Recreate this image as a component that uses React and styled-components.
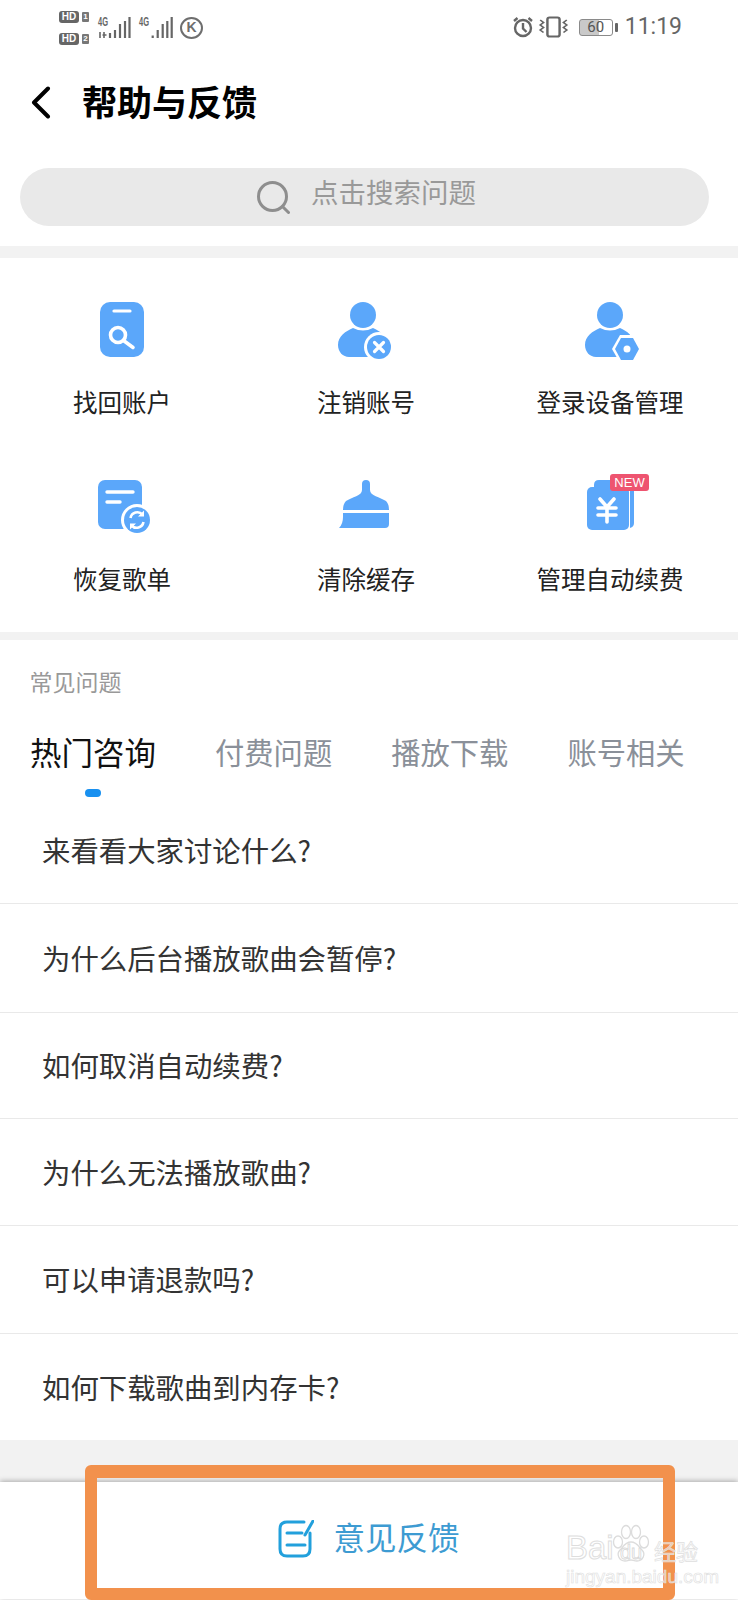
import styled, { createGlobalStyle } from "styled-components";

const BLUE = "#5ba7fa";

const GlobalStyle = createGlobalStyle`
    html, body {
        margin: 0;
        padding: 0;
        background: #ffffff;
    }
    body {
        font-family: "Noto Sans CJK SC", "Noto Sans", sans-serif;
    }
    * {
        box-sizing: border-box;
    }
`;

function Signal({ first }) {
    const xs = first ? [13, 18, 23, 28, 32.5] : [14.7, 19.7, 24.7, 29.3, 33.7];
    const tops = first ? [19, 16, 10, 7, 3] : [21.5, 16, 10, 7, 3];
    return (
        <svg width="36" height="26" viewBox="0 0 36 26">
            <text x="1" y="12" fontSize="12" fontWeight="700" fill="#666" fontFamily="Liberation Sans, sans-serif" textLength="10" lengthAdjust="spacingAndGlyphs">4G</text>
            {first && <path d="M3 18v6M7 18v6M5.5 21h4" stroke="#666" strokeWidth="1.6" fill="none" />}
            {xs.map((x, i) => (
                <line key={x} x1={x} x2={x} y1={tops[i]} y2="24" stroke="#666" strokeWidth="2.2" />
            ))}
        </svg>
    );
}

function HdRow({ n }) {
    return (
        <HdLine>
            <HdBadge>HD</HdBadge>
            <HdNum>{n}</HdNum>
        </HdLine>
    );
}

function AlarmIcon() {
    return (
        <svg width="22" height="22" viewBox="0 0 22 22" fill="none" stroke="#666" strokeWidth="2.4">
            <circle cx="11" cy="12" r="8" />
            <path d="M11 7v5.5l3.5 3.5M2 5l3.5-3M20 5l-3.5-3" />
        </svg>
    );
}

function VibrateIcon() {
    return (
        <svg width="31" height="22" viewBox="0 0 28 22" preserveAspectRatio="none" fill="none" stroke="#666" strokeWidth="2.2">
            <rect x="8.5" y="1.5" width="11" height="19" rx="2" />
            <path d="M2 4l3 2.5-3 2.5 3 2.5-3 2.5 3 2.5M26 4l-3 2.5 3 2.5-3 2.5 3 2.5-3 2.5" strokeWidth="1.6" />
        </svg>
    );
}

function BackIcon() {
    return (
        <svg width="20" height="33" viewBox="0 0 20 33" fill="none" stroke="#000" strokeWidth="4" strokeLinecap="round" strokeLinejoin="round">
            <path d="M17 2.5L3 16.5l14 14" />
        </svg>
    );
}

function SearchIcon() {
    return (
        <svg width="33" height="33" viewBox="0 0 33 33" fill="none" stroke="#8e8e8e" strokeWidth="3">
            <circle cx="15.5" cy="15.5" r="14" />
            <path d="M25.5 25.5l6 6" strokeLinecap="round" />
        </svg>
    );
}

function FindIcon() {
    return (
        <svg width="60" height="60" viewBox="0 0 60 60">
            <rect x="8" y="2" width="44" height="55" rx="10" fill={BLUE} />
            <path d="M22 11h16" stroke="#fff" strokeWidth="3.2" strokeLinecap="round" />
            <circle cx="26" cy="35" r="7.5" fill="none" stroke="#fff" strokeWidth="3.6" />
            <path d="M31.5 40.5L41 47.5" stroke="#fff" strokeWidth="3.6" strokeLinecap="round" />
        </svg>
    );
}

function PersonBody({ headX }) {
    return (
        <g fill={BLUE}>
            <circle cx={headX} cy="15" r="13" />
            <path d={`M${headX - 25} 45C${headX - 25} 36 ${headX - 17} 31 ${headX - 10} 28Q${headX} 33 ${headX + 10} 28C${headX + 17} 31 ${headX + 24} 36 ${headX + 24} 45C${headX + 24} 52 ${headX + 14} 57 ${headX + 8} 57H${headX - 14}C${headX - 20} 57 ${headX - 25} 52 ${headX - 25} 45Z`} />
        </g>
    );
}

function CancelIcon() {
    return (
        <svg width="60" height="60" viewBox="0 0 60 60">
            <PersonBody headX={27} />
            <circle cx="43" cy="47" r="15" fill="#fff" />
            <circle cx="43" cy="47" r="12" fill={BLUE} />
            <path d="M38.5 42.5l9 9M47.5 42.5l-9 9" stroke="#fff" strokeWidth="3.2" strokeLinecap="round" />
        </svg>
    );
}

function DeviceIcon() {
    return (
        <svg width="60" height="60" viewBox="0 0 60 60" overflow="visible">
            <PersonBody headX={30} />
            <path d="M40 35h14L62 49 54 63H40L32 49Z" fill="#fff" />
            <path d="M41 38h12L59 49 53 60H41L35 49Z" fill={BLUE} />
            <circle cx="47" cy="49" r="3.5" fill="#fff" />
        </svg>
    );
}

function RestoreIcon() {
    return (
        <svg width="60" height="60" viewBox="0 0 60 60">
            <rect x="6" y="3" width="44" height="49" rx="7" fill={BLUE} />
            <path d="M15 15h26M15 25h13" stroke="#fff" strokeWidth="3.4" strokeLinecap="round" />
            <circle cx="45" cy="43" r="16" fill="#fff" />
            <circle cx="45" cy="43" r="13" fill={BLUE} />
            <path d="M38.5 41a7 7 0 0 1 12-3.5M51.5 45a7 7 0 0 1-12 3.5" fill="none" stroke="#fff" strokeWidth="2.6" />
            <path d="M52 33.5v6h-6ZM38 52.5v-6h6Z" fill="#fff" />
        </svg>
    );
}

function BroomIcon() {
    return (
        <svg width="60" height="60" viewBox="0 0 60 60" fill={BLUE}>
            <path d="M26 7a4 4 0 0 1 8 0V13C34 19 44 20 50 24Q53 27 53 33H7Q7 27 10 24C16 20 26 19 26 13Z" />
            <path d="M7 36H53V47Q53 51 49 51H3Q7 47 7 40Z" />
        </svg>
    );
}

function RenewIcon() {
    return (
        <svg width="60" height="60" viewBox="0 0 60 60">
            <path d="M14 8q0-5 5-5h30q5 0 5 5v38q0 4-4 5V10H14Z" fill={BLUE} />
            <rect x="7" y="10" width="42" height="43" rx="5" fill={BLUE} />
            <path d="M20 22l7 8 7-8M18 31h18M18 38h18M27 30v15" fill="none" stroke="#fff" strokeWidth="3.6" strokeLinecap="round" />
        </svg>
    );
}

function FeedbackIcon() {
    return (
        <svg width="36" height="38" viewBox="0 0 36 38" fill="none" stroke="#22a0dc" strokeWidth="3" strokeLinecap="round">
            <path d="M26 2H9Q2 2 2 9V29Q2 36 9 36H25Q32 36 32 29V13" />
            <path d="M9 13H24M9 25H27" />
            <path d="M35 1L27 15" />
        </svg>
    );
}

function Paw() {
    return (
        <svg width="46" height="40" viewBox="0 0 46 40" fill="rgba(255,255,255,0.35)" stroke="#dcdcdc" strokeWidth="1.3">
            <ellipse cx="10" cy="18" rx="4.5" ry="6" />
            <ellipse cx="18" cy="8" rx="4.5" ry="6.5" />
            <ellipse cx="28" cy="8" rx="4.5" ry="6.5" />
            <ellipse cx="36" cy="18" rx="4.5" ry="6" />
            <path d="M23 18c6 0 8 5 11 8 4 4 1 11-5 11-3 0-4-1-6-1s-3 1-6 1c-6 0-9-7-5-11 3-3 5-8 11-8Z" />
        </svg>
    );
}

const shortcuts = [
    { label: "找回账户", Icon: FindIcon },
    { label: "注销账号", Icon: CancelIcon },
    { label: "登录设备管理", Icon: DeviceIcon },
    { label: "恢复歌单", Icon: RestoreIcon },
    { label: "清除缓存", Icon: BroomIcon },
    { label: "管理自动续费", Icon: RenewIcon, isNew: true },
];

const tabs = ["热门咨询", "付费问题", "播放下载", "账号相关"];

const questions = [
    { text: "来看看大家讨论什么?", height: 107 },
    { text: "为什么后台播放歌曲会暂停?", height: 109 },
    { text: "如何取消自动续费?", height: 106 },
    { text: "为什么无法播放歌曲?", height: 107 },
    { text: "可以申请退款吗?", height: 108 },
    { text: "如何下载歌曲到内存卡?", height: 106 },
];

export default function App() {
    return (
        <Page>
            <GlobalStyle />
            <StatusBar>
                <HdStack>
                    <HdRow n="1" />
                    <HdRow n="2" />
                </HdStack>
                <SignalGroup>
                    <Signal first />
                    <Signal />
                </SignalGroup>
                <KBadge>K</KBadge>
                <StatusRight>
                    <AlarmIcon />
                    <VibrateIcon />
                    <Battery>
                        <BatteryBody>60</BatteryBody>
                        <BatteryTip />
                    </Battery>
                    <Time>11:19</Time>
                </StatusRight>
            </StatusBar>

            <Header>
                <BackIcon />
                <Title>帮助与反馈</Title>
            </Header>

            <SearchBar>
                <SearchIcon />
                <SearchHint>点击搜索问题</SearchHint>
            </SearchBar>

            <Divider />

            <ShortcutGrid>
                {shortcuts.map(({ label, Icon, isNew }) => (
                    <Shortcut key={label}>
                        <IconBox>
                            <Icon />
                            {isNew && <NewTag>NEW</NewTag>}
                        </IconBox>
                        <ShortcutLabel>{label}</ShortcutLabel>
                    </Shortcut>
                ))}
            </ShortcutGrid>

            <Divider $thin />

            <SectionTitle>常见问题</SectionTitle>

            <TabBar>
                {tabs.map((tab, i) => (
                    <Tab key={tab}>
                        <TabText $active={i === 0}>{tab}</TabText>
                        {i === 0 && <TabMark />}
                    </Tab>
                ))}
            </TabBar>

            <QuestionList>
                {questions.map((q, i) => (
                    <Question key={q.text} $height={q.height} $last={i === questions.length - 1}>{q.text}</Question>
                ))}
            </QuestionList>

            <GrayBand />

            <Footer>
                <FeedbackIcon />
                <FooterText>意见反馈</FooterText>
            </Footer>

            <Highlight />

            <Watermark>
                <WatermarkTop>
                    <WatermarkBai>Bai</WatermarkBai>
                    <PawWrap>
                        <Paw />
                        <WatermarkDu>du</WatermarkDu>
                    </PawWrap>
                    <WatermarkCn>经验</WatermarkCn>
                </WatermarkTop>
                <WatermarkUrl>jingyan.baidu.com</WatermarkUrl>
            </Watermark>
        </Page>
    );
}

const Page = styled.div`
    position: relative;
    width: 738px;
    height: 1600px;
    overflow: hidden;
    background: #ffffff;
`;

const StatusBar = styled.div`
    height: 56px;
    padding: 11px 56px 0 59px;
    display: flex;
    align-items: flex-start;
    color: #666666;
`;

const HdStack = styled.div`
    display: flex;
    flex-direction: column;
    gap: 10px;
`;

const HdLine = styled.div`
    display: flex;
    align-items: center;
    gap: 3px;
`;

const HdBadge = styled.span`
    width: 20px;
    height: 12px;
    border-radius: 3px;
    background: #666666;
    color: #ffffff;
    font-family: "Liberation Sans", sans-serif;
    font-size: 10px;
    font-weight: 700;
    line-height: 12px;
    text-align: center;
`;

const HdNum = styled.span`
    width: 7px;
    height: 10px;
    border-radius: 1px;
    background: #777777;
    color: #ffffff;
    font-family: "Liberation Sans", sans-serif;
    font-size: 8px;
    font-weight: 700;
    line-height: 10px;
    text-align: center;
`;

const SignalGroup = styled.div`
    margin: 3px 0 0 8px;
    display: flex;
    gap: 5px;
`;

const KBadge = styled.div`
    width: 23px;
    height: 22px;
    margin: 6px 0 0 6px;
    border: 2.5px solid #6e6e6e;
    border-radius: 50%;
    color: #6e6e6e;
    font-family: "Liberation Sans", sans-serif;
    font-size: 14px;
    font-weight: 700;
    line-height: 17px;
    text-align: center;
`;

const StatusRight = styled.div`
    margin: 5px 0 0 auto;
    height: 22px;
    display: flex;
    align-items: center;
    gap: 4px;
`;

const Battery = styled.div`
    margin-left: 6px;
    display: flex;
    align-items: center;
    gap: 2px;
`;

const BatteryBody = styled.div`
    width: 34px;
    height: 17px;
    border: 1.5px solid #8a8a8a;
    border-radius: 3px;
    background: linear-gradient(to right, #c9c9c9 60%, #ffffff 60%);
    color: #555555;
    font-family: Roboto, sans-serif;
    font-size: 15px;
    line-height: 14px;
    text-align: center;
`;

const BatteryTip = styled.div`
    width: 3px;
    height: 9px;
    border-radius: 1px;
    background: #666666;
`;

const Time = styled.div`
    margin-left: 3px;
    color: #666666;
    font-family: Roboto, sans-serif;
    font-size: 23px;
    line-height: 22px;
`;

const Header = styled.div`
    height: 92px;
    padding-left: 31px;
    display: flex;
    align-items: center;
    gap: 31px;
`;

const Title = styled.h1`
    margin: 0 0 2px;
    color: #000000;
    font-size: 35px;
    font-weight: 700;
    line-height: 40px;
`;

const SearchBar = styled.div`
    width: 689px;
    height: 58px;
    margin: 20px 0 20px 20px;
    padding-left: 4px;
    border-radius: 29px;
    background: #e9e9e9;
    display: flex;
    align-items: center;
    justify-content: center;
    gap: 21px;
`;

const SearchHint = styled.span`
    margin-bottom: 13px;
    color: #999999;
    font-size: 27.5px;
    line-height: 32px;
`;

const Divider = styled.div`
    height: ${({ $thin }) => ($thin ? "8px" : "12px")};
    background: #f2f2f2;
`;

const ShortcutGrid = styled.div`
    height: 374px;
    padding-top: 42px;
    display: grid;
    grid-template-columns: repeat(3, 244px);
    grid-auto-rows: 118px;
    row-gap: 59px;
`;

const Shortcut = styled.div`
    display: flex;
    flex-direction: column;
    align-items: center;
    gap: 27px;
`;

const IconBox = styled.div`
    position: relative;
    width: 60px;
    height: 60px;
`;

const NewTag = styled.span`
    position: absolute;
    left: 30px;
    top: -3px;
    width: 39px;
    height: 17px;
    border-radius: 3px;
    background: #ee5470;
    color: #ffffff;
    font-family: "Liberation Sans", sans-serif;
    font-size: 13px;
    line-height: 17px;
    text-align: center;
`;

const ShortcutLabel = styled.div`
    color: #222222;
    font-size: 24.5px;
    line-height: 30px;
    white-space: nowrap;
`;

const SectionTitle = styled.div`
    margin: 26px 0 1px 29.5px;
    color: #999999;
    font-size: 23px;
    line-height: 30px;
`;

const TabBar = styled.div`
    margin-top: 35px;
    padding-left: 30px;
    height: 66px;
    display: flex;
    align-items: flex-start;
    gap: 59px;
`;

const Tab = styled.div`
    display: flex;
    flex-direction: column;
    align-items: center;
`;

const TabText = styled.div`
    color: ${({ $active }) => ($active ? "#111111" : "#8a9099")};
    font-size: ${({ $active }) => ($active ? "31.5px" : "29.3px")};
    line-height: 40px;
    white-space: nowrap;
`;

const TabMark = styled.div`
    width: 16px;
    height: 8px;
    margin-top: 18px;
    border-radius: 4px;
    background: #1890f0;
`;

const QuestionList = styled.div`
    display: flex;
    flex-direction: column;
`;

const Question = styled.div`
    height: ${({ $height }) => $height}px;
    padding: 0 0 2px 42px;
    border-bottom: ${({ $last }) => ($last ? "none" : "1px solid #e9e9e9")};
    color: #333333;
    font-size: 28.4px;
    display: flex;
    align-items: center;
`;

const GrayBand = styled.div`
    height: 42px;
    background: #f2f2f2;
`;

const Footer = styled.div`
    position: relative;
    height: 117px;
    padding-bottom: 4px;
    background: #ffffff;
    box-shadow: 0 -1px 5px rgba(0, 0, 0, 0.3);
    display: flex;
    align-items: center;
    justify-content: center;
    gap: 19px;
`;

const FooterText = styled.span`
    margin-bottom: 6px;
    color: #3d9bd2;
    font-size: 31.5px;
    line-height: 40px;
`;

const Highlight = styled.div`
    position: absolute;
    left: 85px;
    top: 1465px;
    width: 590px;
    height: 135px;
    border: 12px solid #f2914c;
    border-top-width: 13px;
    border-radius: 6px;
`;

const Watermark = styled.div`
    position: absolute;
    left: 566px;
    top: 1520px;
    width: 134px;
    display: flex;
    flex-direction: column;
`;

const WatermarkTop = styled.div`
    height: 46px;
    display: flex;
    align-items: flex-end;
`;

const WatermarkBai = styled.span`
    width: 42px;
    color: rgba(255, 255, 255, 0.4);
    -webkit-text-stroke: 1px #dedede;
    font-family: "Liberation Sans", sans-serif;
    font-size: 33px;
    line-height: 36px;
`;

const PawWrap = styled.div`
    position: relative;
    width: 46px;
    height: 40px;
    margin-bottom: 2px;
`;

const WatermarkDu = styled.span`
    position: absolute;
    left: 12px;
    bottom: 2px;
    color: rgba(255, 255, 255, 0.4);
    -webkit-text-stroke: 0.8px #d8d8d8;
    font-family: "Liberation Sans", sans-serif;
    font-size: 20px;
    line-height: 20px;
`;

const WatermarkCn = styled.span`
    color: rgba(255, 255, 255, 0.55);
    -webkit-text-stroke: 0.7px #dedede;
    font-size: 22px;
    line-height: 32px;
    white-space: nowrap;
`;

const WatermarkUrl = styled.div`
    margin-top: 1px;
    color: rgba(255, 255, 255, 0.5);
    -webkit-text-stroke: 0.6px #dedede;
    font-family: "Liberation Sans", sans-serif;
    font-size: 19px;
    line-height: 20px;
    white-space: nowrap;
`;
